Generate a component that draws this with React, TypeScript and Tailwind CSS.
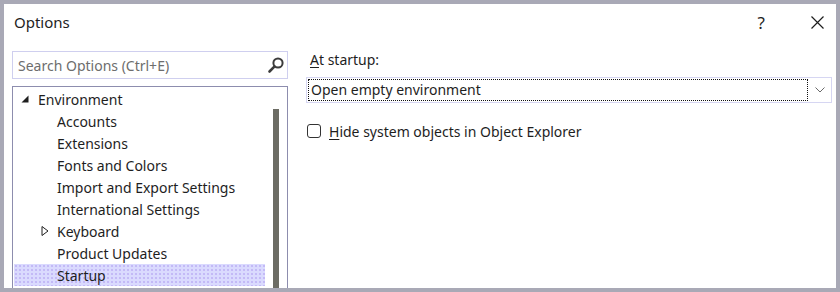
const TREE_ITEMS: { label: string; level: number; expander?: 'open' | 'closed'; selected?: boolean }[] = [
  { label: 'Environment', level: 0, expander: 'open' },
  { label: 'Accounts', level: 1 },
  { label: 'Extensions', level: 1 },
  { label: 'Fonts and Colors', level: 1 },
  { label: 'Import and Export Settings', level: 1 },
  { label: 'International Settings', level: 1 },
  { label: 'Keyboard', level: 1, expander: 'closed' },
  { label: 'Product Updates', level: 1 },
  { label: 'Startup', level: 1, selected: true },
];

function SearchIcon() {
  return (
    <svg width="18" height="18" viewBox="0 0 18 18" fill="none">
      <circle cx="11" cy="7" r="4.6" stroke="#3c3c3c" strokeWidth="2" />
      <path d="M7.6 10.4 L2.5 15.5" stroke="#3c3c3c" strokeWidth="2.6" strokeLinecap="round" />
    </svg>
  );
}

function Expander({ kind }: { kind: 'open' | 'closed' }) {
  if (kind === 'open') {
    return (
      <svg width="8" height="8" viewBox="0 0 8 8">
        <polygon points="7.5,0.5 7.5,7.5 0.5,7.5" fill="#1e1e1e" />
      </svg>
    );
  }
  return (
    <svg width="8" height="10" viewBox="0 0 8 10">
      <polygon points="1,0.5 7,5 1,9.5" fill="white" stroke="#1e1e1e" strokeWidth="1" />
    </svg>
  );
}

export default function App() {
  return (
    <div
      className="w-[840px] h-[292px] border-4 border-[#a9a9b6] bg-white flex flex-col overflow-hidden text-[#1e1e1e]"
      style={{ fontFamily: '"Noto Sans", "Open Sans", sans-serif' }}
    >
      {/* Title bar */}
      <div className="h-[47px] shrink-0 flex items-start">
        <span className="ml-[10px] mt-[7px] text-[15px] leading-[22px]">Options</span>
        <div className="flex-1" />
        <span className="mt-[9px] text-[17px] leading-[20px] mr-[46px]">?</span>
        <svg className="mt-[12px] mr-[12px]" width="13" height="13" viewBox="0 0 13 13" fill="none">
          <path d="M0.5 0.5 L12.5 12.5 M12.5 0.5 L0.5 12.5" stroke="#1e1e1e" strokeWidth="1.2" />
        </svg>
      </div>

      {/* Body */}
      <div className="flex flex-1 min-h-0">
        {/* Left column */}
        <div className="ml-[8px] w-[276px] flex flex-col">
          <div className="h-[28px] border border-[#cfcfef] flex items-center pl-[5px] pr-[2px]">
            <span className="flex-1 text-[14px] text-[#6d6d6d]">Search Options (Ctrl+E)</span>
            <SearchIcon />
          </div>
          <div className="mt-[7px] flex-1 border-t border-l border-r border-[#8d8dae] flex min-h-0">
            <div className="flex-1 pt-[1px] pl-[1px]">
              {TREE_ITEMS.map((item) => (
                <div
                  key={item.label}
                  className={`h-[22px] flex items-center text-[14px] ${
                    item.selected
                      ? 'bg-[#dadafe] bg-[image:radial-gradient(#c2b8f6_0.7px,transparent_0.8px)] bg-[size:4px_4px]'
                      : ''
                  }`}
                >
                  <div className={`${item.level === 0 ? 'w-[24px] pl-[7px]' : 'w-[43px] pl-[27px]'} flex items-center`}>
                    {item.expander && <Expander kind={item.expander} />}
                  </div>
                  <span>{item.label}</span>
                </div>
              ))}
            </div>
            {/* scrollbar thumb */}
            <div className="ml-[8px] mr-[8px] mt-[22px] w-[6px] bg-[#6c6c64]" />
          </div>
        </div>

        {/* Right column */}
        <div className="ml-[18px] mr-[4px] flex-1 flex flex-col">
          <div className="h-[20px] mt-[-1px] pl-[4px] text-[14px] leading-[20px]">
            <span className="underline underline-offset-2">A</span>t startup:
          </div>
          <div className="mt-[7px] h-[26px] border border-[#d6d6f2] flex items-center pl-[1px]">
            <div className="h-[22px] w-[500px] border border-dotted border-[#111] flex items-center pl-[2px] pb-[2px] text-[14px]">
              Open empty environment
            </div>
            <div className="flex-1 flex justify-center">
              <svg width="10" height="6" viewBox="0 0 10 6" fill="none">
                <path d="M0.5 0.5 L5 5 L9.5 0.5" stroke="#6a6a6a" strokeWidth="1" />
              </svg>
            </div>
          </div>
          <div className="mt-[20px] flex items-center h-[16px]">
            <div className="ml-[1px] w-[14px] h-[14px] border border-[#333] rounded-[3px]" />
            <span className="ml-[8px] text-[14px]">
              <span className="underline underline-offset-2">H</span>ide system objects in Object Explorer
            </span>
          </div>
        </div>
      </div>
    </div>
  );
}
